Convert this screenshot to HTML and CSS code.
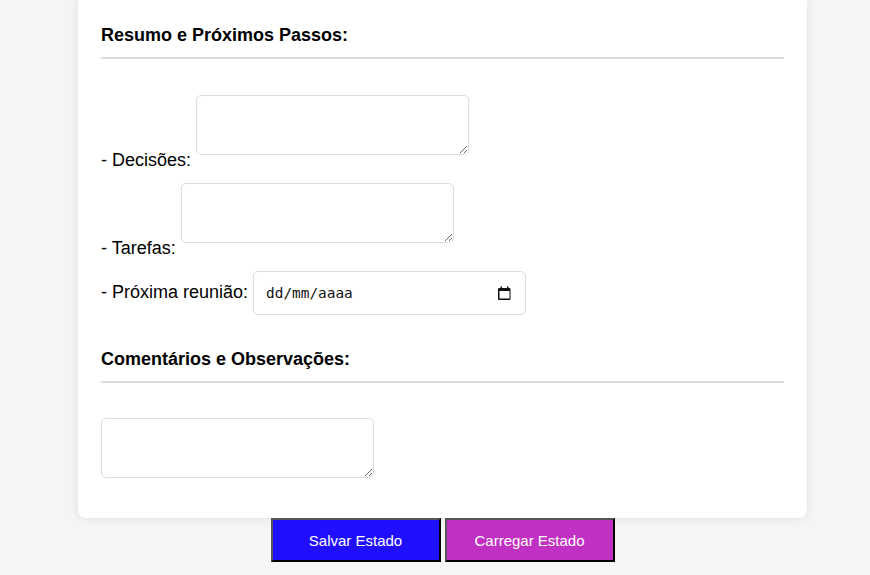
FILE: index.html
```html
<!DOCTYPE html>
<html lang="pt-BR">
<head>
<meta charset="utf-8">
<title>Ata de Reunião</title>
<link rel="stylesheet" href="styles.css">
</head>
<body>
<div class="page">
  <div class="card">
    <section class="section">
      <h3 class="section-title">Resumo e Próximos Passos:</h3>
      <div class="field"><label for="decisoes">- Decisões:</label> <textarea id="decisoes" class="area" rows="2"></textarea></div>
      <div class="field"><label for="tarefas">- Tarefas:</label> <textarea id="tarefas" class="area" rows="2"></textarea></div>
      <div class="field"><label for="proxima">- Próxima reunião:</label> <span class="date-field"><input id="proxima" class="date-input" type="text" placeholder="dd/mm/aaaa"><svg class="cal-icon" width="13" height="14" viewBox="0 0 13 14" aria-hidden="true"><path fill-rule="evenodd" d="M2.5 0.5h1.5v1.5h5V0.5h1.5v1.5h0.8a1.2 1.2 0 0 1 1.2 1.2v9.6a1.2 1.2 0 0 1-1.2 1.2H1.2A1.2 1.2 0 0 1 0 12.8V3.2A1.2 1.2 0 0 1 1.2 2h1.3z M1.5 5v7.5h10V5z"/></svg></span></div>
    </section>
    <section class="section section-next">
      <h3 class="section-title">Comentários e Observações:</h3>
      <div class="field"><textarea class="area" rows="2" aria-label="Comentários e Observações"></textarea></div>
    </section>
  </div>
  <div class="actions">
    <button class="btn btn-save" type="button">Salvar Estado</button>
    <button class="btn btn-load" type="button">Carregar Estado</button>
  </div>
</div>
</body>
</html>
```
FILE: styles.css
```css
html, body {
  margin: 0;
  padding: 0;
  background: #f5f5f5;
}

body {
  font-family: "Liberation Sans", Arial, sans-serif;
  color: #000;
}

.page {
  width: 729px;
  margin: 0 63px 0 78px;
}

.card {
  background: #fff;
  padding: 25px 23px 24px;
  border-radius: 0 0 8px 8px;
  box-shadow: 0 0 10px rgba(0, 0, 0, 0.1);
}

.section-title {
  margin: 0 0 24px;
  font-size: 18px;
  font-weight: bold;
  line-height: normal;
  padding-bottom: 11px;
  border-bottom: 2px solid #ddd;
}

.section-next {
  margin-top: 22px;
}

.section-next .section-title {
  margin-bottom: 23px;
}

.field {
  font-size: 18px;
  line-height: normal;
}

.area {
  box-sizing: border-box;
  width: 40%;
  height: 60px;
  margin: 12px 0 11px;
  padding: 12px;
  border: 1px solid #ddd;
  border-radius: 5px;
  font-family: "DejaVu Sans Mono", monospace;
  font-size: 14.4px;
  vertical-align: baseline;
  background: #fff;
  color: #000;
}

.date-field {
  box-sizing: border-box;
  display: inline-flex;
  align-items: center;
  width: 40%;
  height: 44px;
  margin: 12px 0;
  padding: 0 14px 0 12px;
  border: 1px solid #ddd;
  border-radius: 5px;
  background: #fff;
  vertical-align: baseline;
}

.date-input {
  flex: 1;
  min-width: 0;
  border: none;
  outline: none;
  padding: 0;
  margin: 0;
  background: transparent;
  font-family: "DejaVu Sans Mono", monospace;
  font-size: 14.4px;
  color: #000;
}

.date-input::placeholder {
  color: #111;
  opacity: 1;
}

.cal-icon {
  flex: none;
  fill: #111;
}

.actions {
  display: flex;
  justify-content: center;
  gap: 4px;
}

.btn {
  box-sizing: border-box;
  width: 170px;
  height: 44px;
  margin: 0;
  padding: 0;
  border-width: 2px;
  border-style: solid;
  border-color: #555 #000 #000 #555;
  font-family: "Liberation Sans", Arial, sans-serif;
  font-size: 15px;
  color: #fff;
  cursor: pointer;
}

.btn-save {
  background: #200eff;
}

.btn-load {
  background: #c030c2;
}
```
